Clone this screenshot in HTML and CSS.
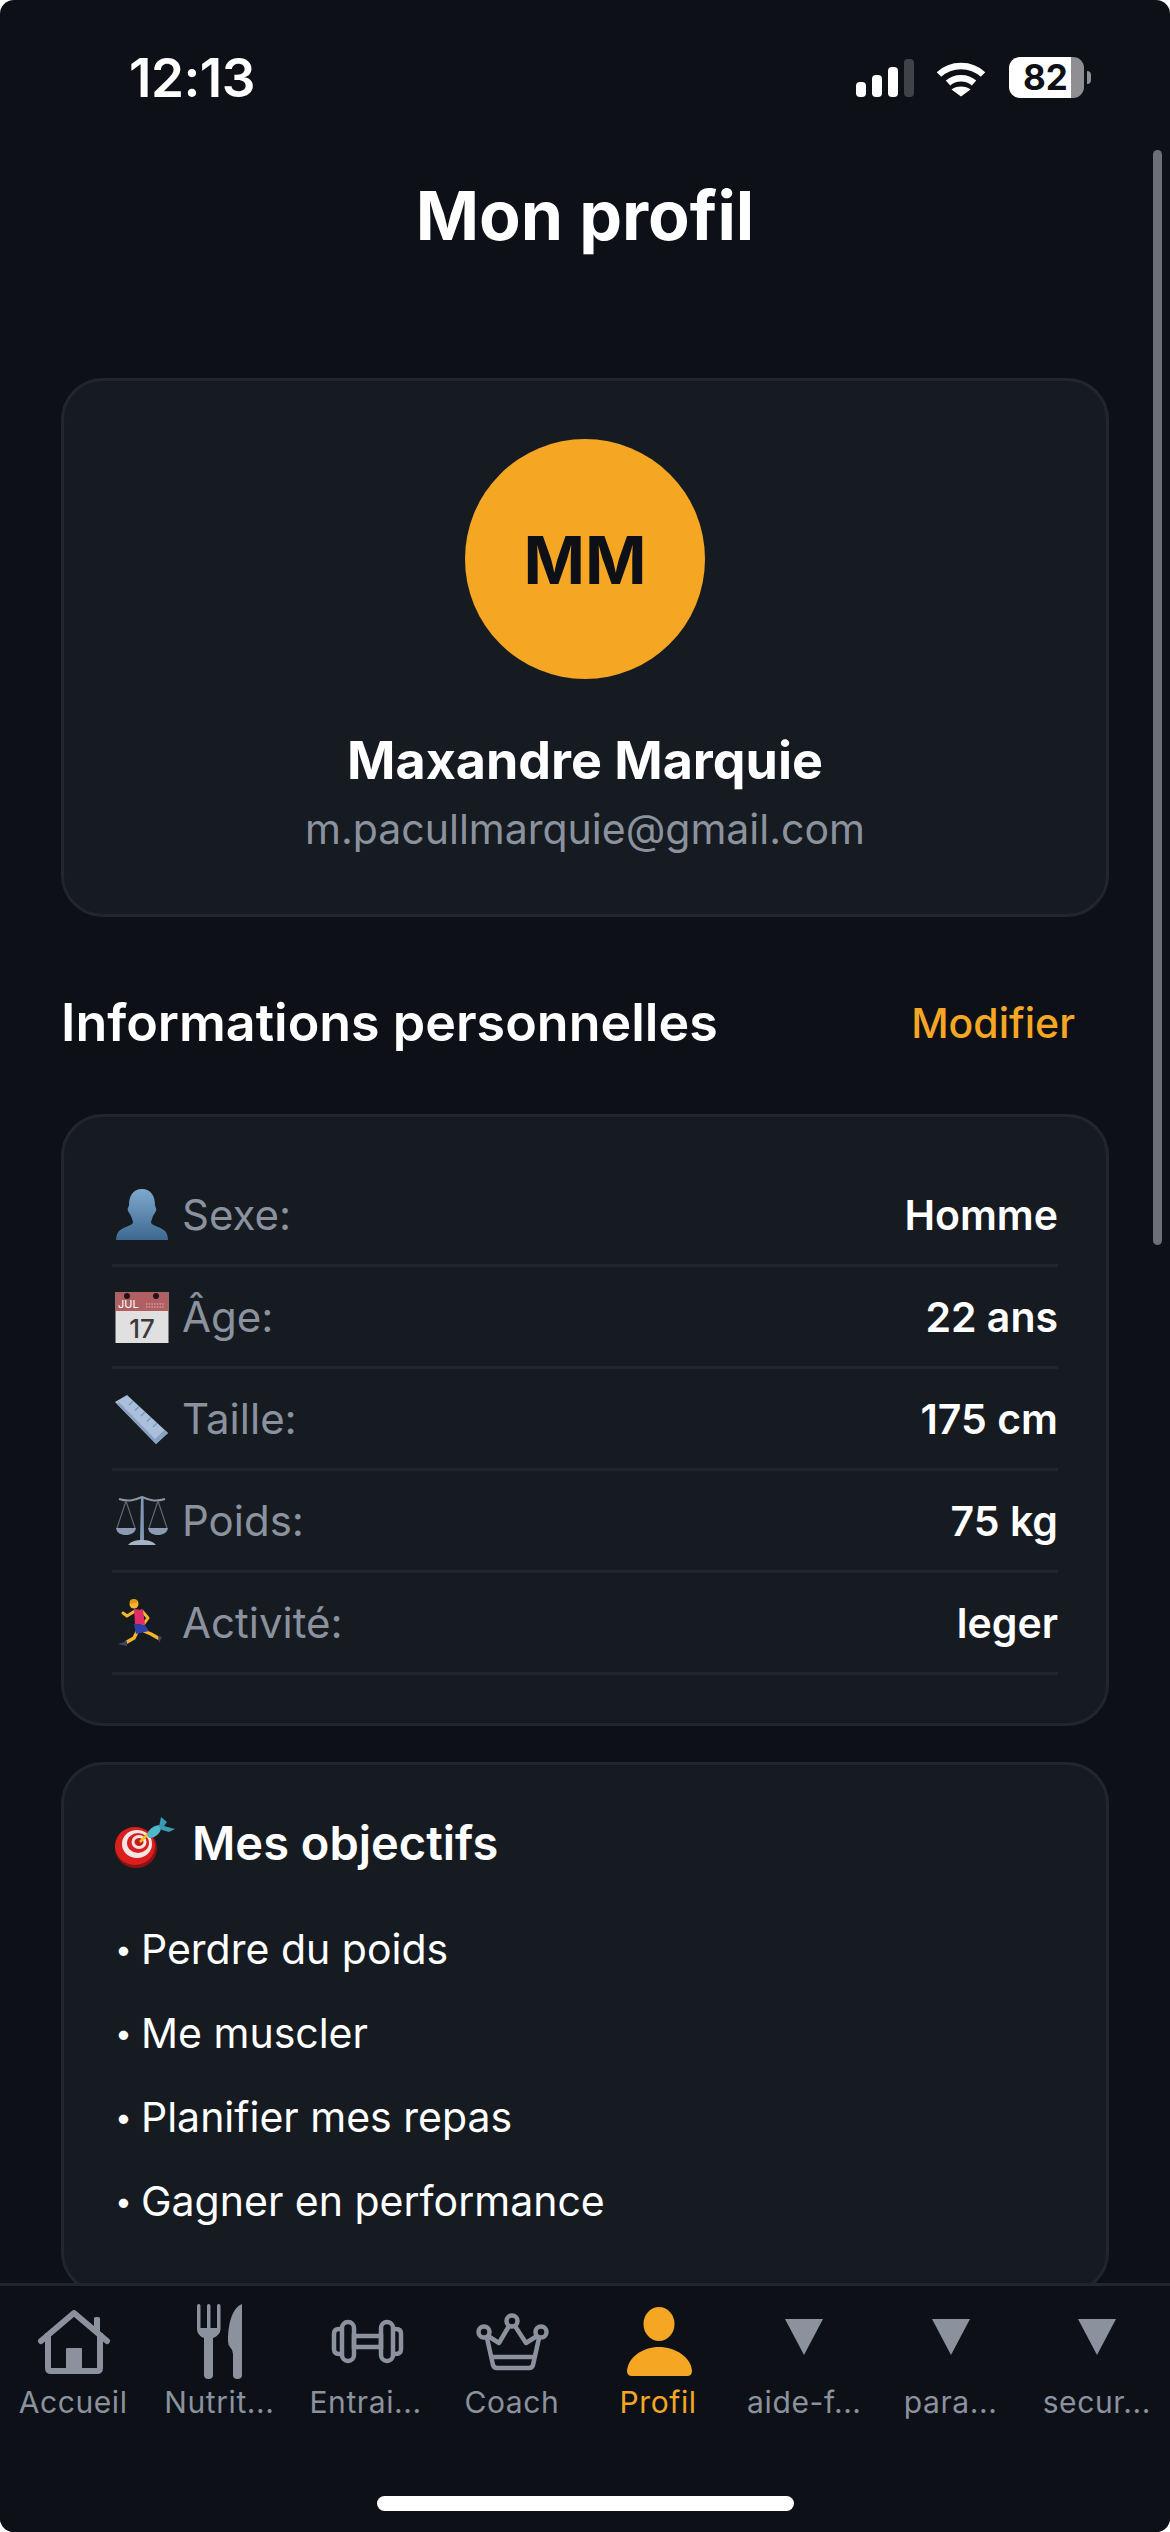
FILE: index.html
```html
<!DOCTYPE html>
<html lang="fr">
<head>
    <meta charset="UTF-8">
    <meta name="viewport" content="width=device-width, initial-scale=1.0">
    <title>Mon profil</title>
    <link rel="stylesheet" href="styles.css">
</head>
<body>
    <div class="screen">
        <div class="statusBar">
            <span class="time">12:13</span>
            <div class="statusIcons">
                <svg class="signal" width="58" height="38" viewBox="0 0 58 38">
                    <rect x="0" y="23" width="10" height="15" rx="4" fill="#fff"/>
                    <rect x="16" y="16" width="10" height="22" rx="4" fill="#fff"/>
                    <rect x="32" y="8" width="10" height="30" rx="4" fill="#fff"/>
                    <rect x="48" y="0" width="10" height="38" rx="4" fill="#3f4247"/>
                </svg>
                <svg class="wifi" width="50" height="38" viewBox="0 0 50 38">
                    <path d="M3 15.5 C15 4 35 4 47 15.5" fill="none" stroke="#fff" stroke-width="6.5"/>
                    <path d="M12 24 C19 17.5 31 17.5 38 24" fill="none" stroke="#fff" stroke-width="6.5"/>
                    <path d="M25 37.5 L15.5 30.5 C20 26.5 30 26.5 34.5 30.5 Z" fill="#fff"/>
                </svg>
                <div class="battery"><span>82</span></div>
                <div class="batteryNub"></div>
            </div>
        </div>

        <div class="content">
            <div class="scrollThumb"></div>
            <h1>Mon profil</h1>

            <div class="card profileCard">
                <div class="avatar">MM</div>
                <div class="name">Maxandre Marquie</div>
                <div class="email">m.pacullmarquie@gmail.com</div>
            </div>

            <div class="sectionHead">
                <h2>Informations personnelles</h2>
                <span class="editLink">Modifier</span>
            </div>

            <div class="card infoCard">
                <div class="infoRow">
                    <span class="infoLabel">
                        <svg class="emoji" width="54" height="54" viewBox="0 0 54 54">
                            <defs>
                                <linearGradient id="bust" x1="0" y1="0" x2="0" y2="1">
                                    <stop offset="0" stop-color="#7fa9cc"/>
                                    <stop offset="1" stop-color="#3d6890"/>
                                </linearGradient>
                            </defs>
                            <path d="M27 1 C36 1 40 8 40 17 C40 19 42 20 41 23 C40 25 39 26 38 28 C37 31 36 33 36 35 C38 38 46 39 50 43 C52 45 53 49 53 52 L1 52 C1 49 2 45 4 43 C8 39 16 38 18 35 C18 33 17 31 16 28 C15 26 14 25 13 23 C12 20 14 19 14 17 C14 8 18 1 27 1 Z" fill="url(#bust)"/>
                        </svg>
                        Sexe:
                    </span>
                    <span class="infoValue">Homme</span>
                </div>
                <div class="infoRow">
                    <span class="infoLabel">
                        <svg class="emoji" width="54" height="54" viewBox="0 0 54 54">
                            <rect x="0.5" y="2" width="53" height="51" fill="#e0e0e0"/>
                            <rect x="0.5" y="2" width="53" height="19" fill="#b05f62"/>
                            <circle cx="12" cy="6" r="3" fill="#1c1416"/>
                            <circle cx="41" cy="6" r="3" fill="#1c1416"/>
                            <text class="calMonth" x="3" y="18">JUL</text>
                            <path d="M31 14 H50 M31 17 H50" stroke="#d59a9c" stroke-width="1.5" stroke-dasharray="1.5 1.2"/>
                            <text class="calDay" x="27" y="48">17</text>
                        </svg>
                        Âge:
                    </span>
                    <span class="infoValue">22 ans</span>
                </div>
                <div class="infoRow">
                    <span class="infoLabel">
                        <svg class="emoji" width="54" height="54" viewBox="0 0 54 54">
                            <path d="M12 3 L53 41 L41 52 L0 10 Z" fill="#a9bfdc"/>
                            <path d="M3 13 L41 52 L53 41 L49.500 38 L40 47 L3 9 Z" fill="#8aa2c2"/>
                            <path d="M18 9 L14 13 M24 14.500 L20 18.500 M30 20 L26 24 M36 25.500 L32 29.500 M42 31 L38 35" stroke="#8197b6" stroke-width="1.5"/>
                        </svg>
                        Taille:
                    </span>
                    <span class="infoValue">175 cm</span>
                </div>
                <div class="infoRow">
                    <span class="infoLabel">
                        <svg class="emoji" width="54" height="54" viewBox="0 0 54 54">
                            <path d="M4 5 C14 8 20 6 27 3 C34 6 40 8 50 5" fill="none" stroke="#8a94a3" stroke-width="2"/>
                            <path d="M11 7 L2 34 M11 7 L20 34 M43 7 L34 34 M43 7 L52 34" fill="none" stroke="#5f6874" stroke-width="1.2"/>
                            <path d="M26 3 H28.500 L29 47 H25 Z" fill="#8197b6"/>
                            <path d="M1 34 H21 C20 40 14 41 11 41 C7 41 2 40 1 34 Z M33 34 H53 C52 40 46 41 43 41 C39 41 34 40 33 34 Z" fill="#8b9cb2"/>
                            <path d="M13 51 C16 47 22 46 27 46 C32 46 38 47 41 51 Z" fill="#a6b4c6"/>
                        </svg>
                        Poids:
                    </span>
                    <span class="infoValue">75 kg</span>
                </div>
                <div class="infoRow">
                    <span class="infoLabel">
                        <svg class="emoji" width="54" height="54" viewBox="0 0 54 54">
                            <circle cx="19" cy="8" r="4.500" fill="#f7b52c"/>
                            <path d="M14.500 6 C15 2 22 2 23.500 6 L16 8 Z" fill="#e0951f"/>
                            <path d="M20 15 L12 20 L8 17" fill="none" stroke="#f7b52c" stroke-width="3" stroke-linecap="round" stroke-linejoin="round"/>
                            <path d="M27 15 L33 22 L28 29" fill="none" stroke="#f7b52c" stroke-width="3" stroke-linecap="round" stroke-linejoin="round"/>
                            <path d="M19 13 L28 14 L30 29 L20 28 Z" fill="#de2e6a"/>
                            <path d="M23 34 L19 42 L12 46" fill="none" stroke="#f7b52c" stroke-width="3.500" stroke-linecap="round" stroke-linejoin="round"/>
                            <path d="M29 35 L36 38 L43 42" fill="none" stroke="#f7b52c" stroke-width="3.500" stroke-linecap="round" stroke-linejoin="round"/>
                            <path d="M19 28 L30 29 L34 35 L21 38 Z" fill="#2d3fa8"/>
                            <path d="M12 45 L3 48 L12 50 Z M43 40 L47 41 L44 47 Z" fill="#39466b"/>
                        </svg>
                        Activité:
                    </span>
                    <span class="infoValue">leger</span>
                </div>
            </div>

            <div class="card goalsCard">
                <h3>
                    <svg class="emoji" width="60" height="52" viewBox="0 0 60 52">
                        <ellipse cx="21" cy="31" rx="21" ry="20" fill="#8f1116"/>
                        <ellipse cx="20" cy="29" rx="20" ry="19" fill="#d9201f"/>
                        <ellipse cx="22" cy="27" rx="15" ry="14" fill="#f4e6e4"/>
                        <ellipse cx="23" cy="26" rx="11" ry="10" fill="#d9201f"/>
                        <ellipse cx="24" cy="25" rx="7.500" ry="7" fill="#f4e6e4"/>
                        <ellipse cx="24" cy="25" rx="4.500" ry="4" fill="#c9181b"/>
                        <path d="M25 25 L33 17" stroke="#f0c419" stroke-width="2.500"/>
                        <path d="M32 18 C33 12 40 8 45 8 L46 11 C46 16 40 21 34 21 Z" fill="#4fb8c9"/>
                        <path d="M44 10 L46 0 L52 5 L49 9 L60 12 L54 15 L47 13 Z" fill="#3b9bb0"/>
                    </svg>
                    Mes objectifs
                </h3>
                <ul class="goalList">
                    <li><span class="bullet">•</span>Perdre du poids</li>
                    <li><span class="bullet">•</span>Me muscler</li>
                    <li><span class="bullet">•</span>Planifier mes repas</li>
                    <li><span class="bullet">•</span>Gagner en performance</li>
                </ul>
            </div>
        </div>

        <div class="tabBar">
            <div class="tabs">
                <div class="tab">
                    <svg class="tabIcon" width="84" height="84" viewBox="0 0 84 84">
                        <path d="M17 33 V68 Q17 71 20 71 H66 Q69 71 69 68 V33" fill="none" stroke="#8b929e" stroke-width="6"/>
                        <path d="M10 41 L43 13 L76 41" fill="none" stroke="#8b929e" stroke-width="6" stroke-linecap="round" stroke-linejoin="round"/>
                        <path d="M63 18 Q63 17 66 17 Q69 17 69 18 V34 H63 Z" fill="#8b929e"/>
                        <rect x="35" y="48" width="16" height="23" rx="1" fill="#8b929e"/>
                    </svg>
                    <span class="tabLabel">Accueil</span>
                </div>
                <div class="tab">
                    <svg class="tabIcon" width="84" height="84" viewBox="0 0 84 84">
                        <path d="M20 6 Q20 4 21.700 4 Q23.500 4 23.500 6 V28 H30 V6 Q30 4 31.700 4 Q33.500 4 33.500 6 V28 H40 V6 Q40 4 41.700 4 Q43.500 4 43.500 6 V29 C43.500 34 39 37 36 38 V75 Q36 79 31.500 79 Q27 79 27 75 V38 C24 37 20 34 20 29 Z" fill="#8b929e"/>
                        <path d="M65 4 V75 Q65 79 60.500 79 Q56 79 56 75 V54 Q56 50 53 47 Q51 45 51 41 C51 24 55 8 65 4 Z" fill="#8b929e"/>
                    </svg>
                    <span class="tabLabel">Nutrit...</span>
                </div>
                <div class="tab">
                    <svg class="tabIcon" width="84" height="84" viewBox="0 0 84 84">
                        <g fill="none" stroke="#8b929e" stroke-width="4.500">
                            <rect x="18" y="22" width="12" height="39" rx="6"/>
                            <rect x="57" y="22" width="12" height="39" rx="6"/>
                            <path d="M18 29 H15 Q10 29 10 34 V49 Q10 54 15 54 H18"/>
                            <path d="M69 29 H72 Q77 29 77 34 V49 Q77 54 72 54 H69"/>
                            <rect x="30" y="36" width="27" height="11"/>
                        </g>
                    </svg>
                    <span class="tabLabel">Entrai...</span>
                </div>
                <div class="tab">
                    <svg class="tabIcon" width="84" height="84" viewBox="0 0 84 84">
                        <g fill="none" stroke="#8b929e" stroke-width="4.500" stroke-linejoin="round">
                            <circle cx="42" cy="21" r="5.500"/>
                            <circle cx="14" cy="32" r="5.500"/>
                            <circle cx="71" cy="32" r="5.500"/>
                            <path d="M18 36 L29 43 L39 26 M45 26 L56 43 L67 36"/>
                            <path d="M17 38 L23 65 Q24 68 27 68 H59 Q62 68 63 65 L69 38"/>
                            <path d="M21 57 H65"/>
                        </g>
                    </svg>
                    <span class="tabLabel">Coach</span>
                </div>
                <div class="tab active">
                    <svg class="tabIcon" width="84" height="84" viewBox="0 0 84 84">
                        <ellipse cx="43" cy="24" rx="15.500" ry="17" fill="#f5a623"/>
                        <path d="M11 71 C12 57 27 47 43 47 C59 47 75 57 76 71 Q76 76 71 76 H16 Q11 76 11 71 Z" fill="#f5a623"/>
                    </svg>
                    <span class="tabLabel">Profil</span>
                </div>
                <div class="tab">
                    <svg class="tabIcon" width="84" height="84" viewBox="0 0 84 84"><polygon points="23,19 61,19 42,55" fill="#8b929e"/></svg>
                    <span class="tabLabel">aide-f...</span>
                </div>
                <div class="tab">
                    <svg class="tabIcon" width="84" height="84" viewBox="0 0 84 84"><polygon points="23,19 61,19 42,55" fill="#8b929e"/></svg>
                    <span class="tabLabel">para...</span>
                </div>
                <div class="tab">
                    <svg class="tabIcon" width="84" height="84" viewBox="0 0 84 84"><polygon points="23,19 61,19 42,55" fill="#8b929e"/></svg>
                    <span class="tabLabel">secur...</span>
                </div>
            </div>
            <div class="homeBar"></div>
        </div>
    </div>
</body>
</html>
```

FILE: styles.css
```css
body {
    margin: 0;
    background: #fff;
    font-family: 'Inter', 'Noto Sans', sans-serif;
    color: #fff;
    overflow: hidden;
}
.screen {
    width: 1170px;
    height: 2532px;
    background: #0d1117;
    border-radius: 14px;
    display: flex;
    flex-direction: column;
    overflow: hidden;
}

/* Status bar */
.statusBar {
    height: 150px;
    flex-shrink: 0;
    box-sizing: border-box;
    padding: 57px 79px 0 129px;
    display: flex;
    justify-content: space-between;
    align-items: flex-start;
}
.time {
    font-size: 53px;
    font-weight: 600;
    line-height: 42px;
    letter-spacing: -0.5px;
}
.statusIcons {
    display: flex;
    align-items: center;
    height: 41px;
}
.signal { margin-right: 22px; }
.wifi { margin-right: 23px; }
.battery {
    width: 75px;
    height: 41px;
    border-radius: 11px;
    background: linear-gradient(90deg, #fff 62px, #8e8e93 62px);
    box-sizing: border-box;
    padding-left: 14px;
    color: #0d1117;
    font-size: 35px;
    font-weight: 700;
    line-height: 41px;
}
.batteryNub {
    width: 4px;
    height: 13px;
    margin-left: 3px;
    background: #8e8e93;
    border-radius: 0 4px 4px 0;
}

/* Scrolling part */
.content {
    flex: 1;
    min-height: 0;
    overflow: hidden;
    position: relative;
    padding: 0 61px;
}
.scrollThumb {
    position: absolute;
    top: 0;
    right: 8px;
    width: 9px;
    height: 1095px;
    border-radius: 5px;
    background: #6c6f75;
}
h1 {
    margin: 0 0 111px;
    height: 117px;
    line-height: 130px;
    text-align: center;
    font-size: 68px;
    font-weight: 700;
}
.card {
    background: #161b22;
    border: 3px solid #21262d;
    border-radius: 42px;
}
.profileCard {
    height: 539px;
    box-sizing: border-box;
    padding-top: 58px;
    display: flex;
    flex-direction: column;
    align-items: center;
}
.avatar {
    width: 240px;
    height: 240px;
    border-radius: 50%;
    background: #f5a623;
    color: #0d1117;
    font-size: 66px;
    font-weight: 700;
    line-height: 242px;
    text-align: center;
}
.name {
    margin-top: 50px;
    font-size: 52px;
    font-weight: 700;
    line-height: 64px;
}
.email {
    margin-top: 10px;
    font-size: 41px;
    line-height: 52px;
    color: #8b929e;
}

.sectionHead {
    height: 197px;
    box-sizing: border-box;
    padding: 14px 34px 0 0;
    display: flex;
    justify-content: space-between;
    align-items: center;
}
h2 {
    margin: 0;
    font-size: 52px;
    font-weight: 600;
}
.editLink {
    font-size: 41px;
    font-weight: 500;
    color: #f5a623;
}

.infoCard { padding: 48px; }
.infoRow {
    height: 102px;
    box-sizing: border-box;
    border-bottom: 3px solid #21262d;
    display: flex;
    justify-content: space-between;
    align-items: center;
    font-size: 42px;
}
.infoLabel {
    display: flex;
    align-items: center;
    gap: 13px;
    color: #8b929e;
}
.emoji { flex-shrink: 0; margin-left: 3px; }
.infoValue {
    font-size: 41px;
    font-weight: 600;
}
.calMonth {
    font-size: 11px;
    fill: #fff;
}
.calDay {
    font-size: 26px;
    font-weight: 500;
    fill: #3a3a3a;
    text-anchor: middle;
}

.goalsCard {
    margin-top: 36px;
    padding: 48px;
}
h3 {
    margin: 0 0 34px;
    display: flex;
    align-items: center;
    gap: 17px;
    font-size: 47px;
    font-weight: 600;
    line-height: 60px;
}
.goalList {
    list-style: none;
    margin: 0;
    padding: 0 0 0 3px;
}
.goalList li {
    height: 84px;
    line-height: 84px;
    font-size: 41px;
    display: flex;
}
.bullet {
    width: 26px;
    font-size: 30px;
}

/* Bottom tabs */
.tabBar {
    height: 249px;
    flex-shrink: 0;
    box-sizing: border-box;
    background: #0d1117;
    border-top: 3px solid #21262d;
    padding-top: 14px;
    display: flex;
    flex-direction: column;
    align-items: center;
}
.tabs {
    display: flex;
    width: 100%;
}
.tab {
    flex: 1;
    min-width: 0;
    display: flex;
    flex-direction: column;
    align-items: center;
    color: #8b929e;
}
.tab.active { color: #f5a623; }
.tabIcon { display: block; }
.tabLabel {
    font-size: 30px;
    line-height: 36px;
    letter-spacing: 0.6px;
    white-space: nowrap;
}
.homeBar {
    width: 417px;
    height: 15px;
    margin-top: 76px;
    border-radius: 8px;
    background: #fff;
}
```
